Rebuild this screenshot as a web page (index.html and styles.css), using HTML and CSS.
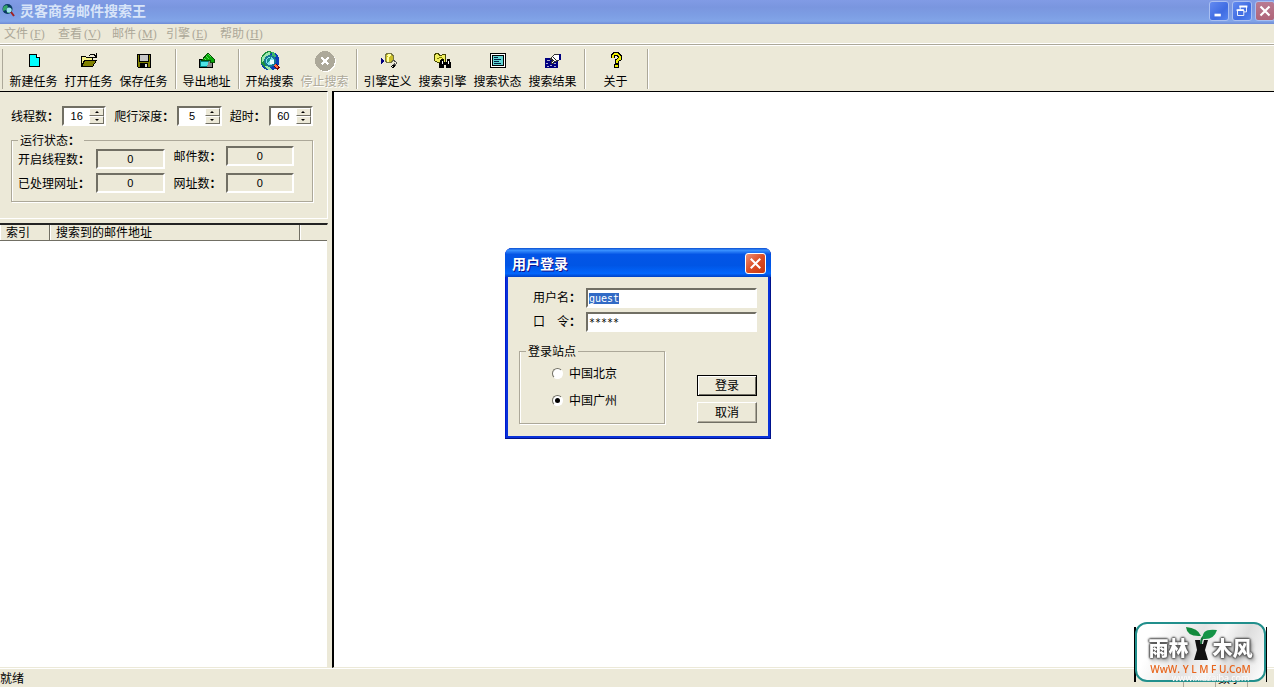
FILE: index.html
```html
<!DOCTYPE html>
<html lang="zh-CN">
<head>
<meta charset="utf-8">
<meta name="viewport" content="width=device-width, initial-scale=1">
<title>灵客商务邮件搜索王</title>
<link rel="stylesheet" href="styles.css">
<script src="main.js" defer></script>
</head>
<body>
<header class="titlebar">
  <svg class="app-icon" viewBox="0 0 13 13"><circle cx="5.500" cy="5" r="5" fill="#093a63"/><path d="M2 2l3-1 1 2-2 3-3 1V4zM6 5l3-1 1 2-2 3H5z" fill="#35a56a"/><circle cx="7" cy="6" r="2.500" fill="#9fe0f0"/><path d="M9 8l3 4" stroke="#a02020" stroke-width="2"/></svg>
  <h1 class="app-title">灵客商务邮件搜索王</h1>
  <div class="win-controls">
    <button class="win-btn" aria-label="最小化"><svg viewBox="0 0 20 20"><path d="M5 13h7v3H5z" fill="#fff"/></svg></button>
    <button class="win-btn" aria-label="还原"><svg viewBox="0 0 20 20"><path d="M8 8V5h7v6h-3M5 9h7v6H5z" fill="none" stroke="#fff" stroke-width="1"/><path d="M7 5h9M4 9h8" stroke="#fff" stroke-width="2"/></svg></button>
    <button class="win-btn win-btn-close" aria-label="关闭"><svg viewBox="0 0 20 20"><path d="M5 5l10 10M15 5L5 15" stroke="#fff" stroke-width="2.400"/></svg></button>
  </div>
</header>
<nav class="menubar">
  <button class="menu" disabled>文件<span class="key">(<u>F</u>)</span></button>
  <button class="menu" disabled>查看<span class="key">(<u>V</u>)</span></button>
  <button class="menu" disabled>邮件<span class="key">(<u>M</u>)</span></button>
  <button class="menu" disabled>引擎<span class="key">(<u>E</u>)</span></button>
  <button class="menu" disabled>帮助<span class="key">(<u>H</u>)</span></button>
</nav>
<div class="toolbar">
  <div class="tool-group">
    <button class="tool"><svg viewBox="0 0 24 24"><path d="M7.500 5.500h7l3 3v9h-10z" fill="#0ff" stroke="#000"/><path d="M14.500 5.500v3h3" fill="#fff" stroke="#000"/></svg>新建任务</button>
    <button class="tool"><svg viewBox="0 0 24 24"><path d="M4.500 16.500v-9h4l1 1h6v3" fill="#f4f08a" stroke="#000"/><path d="M4.500 17.500l3-6h12l-4 6z" fill="#808000" stroke="#000"/><path d="M12 6.500l2-1h3l2 2M19.500 4v4H16" fill="none" stroke="#000"/></svg>打开任务</button>
    <button class="tool"><svg viewBox="0 0 24 24"><path d="M5.500 5.500h13v13h-12l-1-1z" fill="#808000" stroke="#000"/><path d="M8 6h8v6H8z" fill="#c8c8c8"/><path d="M8 14h8v4H8z" fill="#000"/><path d="M13 15h2v3h-2z" fill="#ddd"/><path d="M7.500 6v6.500h9V6" fill="none" stroke="#000"/></svg>保存任务</button>
  </div>
  <div class="tool-group">
    <button class="tool"><svg viewBox="0 0 24 24"><path d="M4.500 10.500h13v8h-13z" fill="#008080" stroke="#000"/><path d="M6 13h8l-2 4H6z" fill="#4ee4e8"/><path d="M14 12h3v6h-5z" fill="#888"/><path d="M7 11l6-7 6 6v3h-4v-2z" fill="#08a808" stroke="#064d06"/><path d="M11 7l3 3M13 5l3 3M9 9l2 2" stroke="#56dd56"/></svg>导出地址</button>
  </div>
  <div class="tool-group">
    <button class="tool"><svg viewBox="0 0 24 24"><circle cx="12" cy="12" r="9.500" fill="#0b3fb8"/><path d="M12 2a10 10 0 0 0-9 13l5 5 3-2-3-5-3-1 2-4 5-2 2-3z" fill="#1c8f3f"/><path d="M4 9l4-5 4-1v3l-4 4-4 3zM7 17l4-1 3 5h-4z" fill="#9ce7ad"/><path d="M14 3l3 1 1 4-4-1z" fill="#39b86a"/><circle cx="12" cy="12" r="5" fill="#7fe3ee" stroke="#157694" stroke-width="2"/><path d="M9 10l4-2-1 4-3 2z" fill="#14908e"/><circle cx="14" cy="13" r="2.500" fill="#e8ffff"/><path d="M17 16l4 4" stroke="#700" stroke-width="4"/><path d="M17 16l3 3" stroke="#ff6d47" stroke-width="2"/></svg>开始搜索</button>
    <button class="tool" disabled><svg viewBox="0 0 24 24"><circle cx="13" cy="13" r="10" fill="#fff"/><circle cx="12" cy="12" r="10" fill="#aca899"/><path d="M8.500 8.500l7 7M15.500 8.500l-7 7" stroke="#fff" stroke-width="2"/></svg>停止搜索</button>
  </div>
  <div class="tool-group">
    <button class="tool"><svg viewBox="0 0 24 24"><path d="M5 9v6l3-3z" fill="#000080"/><path d="M9 6.500l2-2h4l2 2v5l-2 2h-4l-2-2z" fill="#c9bd28" stroke="#777744"/><path d="M10 6l3-1 3 1-3 2zM11 8h2v5h-2z" fill="#ffff9c"/><path d="M17 11l3 2v2l-3 1M18 14l2 3" stroke="#555" fill="none"/><path d="M15 18l2-2 2 1-3 2" stroke="#000" fill="none"/></svg>引擎定义</button>
    <button class="tool"><svg viewBox="0 0 24 24"><path d="M3.500 5.500l2-1h2l1 2 6-1v8h-8l-3-2z" fill="#f0ef60" stroke="#454500"/><path d="M6 10l4-2 2 2" stroke="#808000" fill="none"/><path d="M10 10h3v3h3v-3h3l1 5v4h-5v-3h-2v3H8v-4z" fill="#000"/><path d="M11 12v3M17 12v3" stroke="#fff"/></svg>搜索引擎</button>
    <button class="tool"><svg viewBox="0 0 24 24"><rect x="4.500" y="4.500" width="15" height="14" rx="1" fill="#fff" stroke="#000"/><rect x="6.500" y="6.500" width="11" height="10" fill="#62d5d5" stroke="#000"/><path d="M8 8.500h4M8 10.500h7M8 12.500h5M8 14.500h7" stroke="#024"/></svg>搜索状态</button>
    <button class="tool"><svg viewBox="0 0 24 24"><path d="M4 9h13v10H4z" fill="#000080"/><path d="M6 11h3M5 14h2M9 16h2M13 14h2M6 17h2M13 17h2" stroke="#acaccf"/><path d="M9 10l5-5 4 1v5l-5 2-1 2-2-1 2-3z" fill="#fff" stroke="#333"/><path d="M12 8l3 3M10 9l3 3" stroke="#222"/><path d="M18 5h2v6h-2z" fill="#000080"/></svg>搜索结果</button>
  </div>
  <div class="tool-group">
    <button class="tool"><svg viewBox="0 0 24 24"><path d="M8.500 9V7l2-2h3l2 2v3l-3 2v3" fill="none" stroke="#000" stroke-width="4"/><path d="M8.500 9V7l2-2h3l2 2v3l-3 2v2" fill="none" stroke="#ee0" stroke-width="2"/><circle cx="12.500" cy="17" r="2" fill="#ee0" stroke="#000"/></svg>关于</button>
  </div>
</div>
<main class="workspace">
  <section class="side">
    <form class="settings">
      <div class="spin-row">
        <label class="spin-label" for="threads">线程数<span class="colon">：</span></label>
        <div class="spin"><input id="threads" value="16"><div class="arrows"><button type="button" aria-label="增加"></button><button type="button" class="down" aria-label="减少"></button></div></div>
        <label class="spin-label" for="depth">爬行深度<span class="colon">：</span></label>
        <div class="spin"><input id="depth" value="5"><div class="arrows"><button type="button" aria-label="增加"></button><button type="button" class="down" aria-label="减少"></button></div></div>
        <label class="spin-label" for="timeout">超时<span class="colon">：</span></label>
        <div class="spin"><input id="timeout" value="60"><div class="arrows"><button type="button" aria-label="增加"></button><button type="button" class="down" aria-label="减少"></button></div></div>
      </div>
      <fieldset class="group status-group">
        <legend>运行状态<span class="colon">：</span></legend>
        <div class="stats">
          <label for="open">开启线程数<span class="colon">：</span></label><input id="open" value="0" readonly>
          <label class="raised" for="mails">邮件数<span class="colon">：</span></label><input class="raised" id="mails" value="0" readonly>
          <label for="done">已处理网址<span class="colon">：</span></label><input id="done" value="0" readonly>
          <label for="urls">网址数<span class="colon">：</span></label><input id="urls" value="0" readonly>
        </div>
      </fieldset>
    </form>
    <div class="list">
      <table class="results">
        <thead><tr><th class="col-index">索引</th><th class="col-mail">搜索到的邮件地址</th><th></th></tr></thead>
      </table>
    </div>
  </section>
  <section class="view"></section>
</main>
<footer class="statusbar"><span>就绪</span><span class="panes"><span class="pane"></span><span class="pane"></span><span class="pane">数字</span></span></footer>

<div class="overlay">
  <section class="dialog" role="dialog" aria-labelledby="dlg-title">
    <header class="dialog-title">
      <h2 id="dlg-title">用户登录</h2>
      <button class="dialog-close" aria-label="关闭"><svg viewBox="0 0 20 20"><path d="M5 5l10 10M15 5L5 15" stroke="#fff" stroke-width="2.200"/></svg></button>
    </header>
    <form class="dialog-body">
      <div class="fields">
        <label for="user">用户名<span class="colon">：</span></label><input id="user" value="guest">
        <label for="pass">口　令<span class="colon">：</span></label><input id="pass" value="*****" autocomplete="off">
      </div>
      <div class="dialog-bottom">
        <fieldset class="group site-group">
          <legend>登录站点</legend>
          <label class="choice"><input type="radio" name="site">中国北京</label>
          <label class="choice"><input type="radio" name="site" checked>中国广州</label>
        </fieldset>
        <div class="actions">
          <button type="button" class="push default">登录</button>
          <button type="button" class="push">取消</button>
        </div>
      </div>
    </form>
  </section>
</div>

<aside class="badge-wrap">
  <div class="badge">
    <div class="badge-name"><span>雨林</span><svg viewBox="0 0 32 36"><path d="M10 15h5l1 4h2l1-4h4l-3 10 3 10H9l3-10z" fill="#111"/><path d="M16 19q0-7 5-9" fill="none" stroke="#17713c" stroke-width="2"/><path d="M16 11Q2 12 1 2q12 1 15 9z" fill="#128a3c"/><path d="M18 14Q16 3 32 5q-3 10-14 9z" fill="#159447"/></svg><span>木风</span></div>
    <div class="badge-url">WwW. Y L M F U.CoM</div>
    <div class="badge-host">www.xiazaiba.com</div>
  </div>
</aside>
</body>
</html>
```

FILE: styles.css
```css
* { box-sizing: border-box; }
:root {
  --face: #ece9d8;
  --shade: #aca899;
  --dark: #716f64;
}
body {
  margin: 0;
  height: 100vh;
  display: flex;
  flex-direction: column;
  overflow: hidden;
  background: var(--face);
  color: #000;
  font: 12px/16px "Noto Sans CJK SC", sans-serif;
  text-spacing-trim: space-all;
}
button, input { font: inherit; color: inherit; margin: 0; padding: 0; }
button { border: 0; background: none; white-space: nowrap; }
svg { display: block; }
.colon { font-family: "Noto Sans CJK TC", sans-serif; font-weight: 700; }

.titlebar {
  flex: none;
  display: flex;
  align-items: center;
  height: 24px;
  padding: 0 0 3px 2px;
  background: linear-gradient(#819be5, #7a96df 30%, #7d9ee4 65%, #82a5e8 88%, #6f8bd6);
}
.app-icon { width: 13px; height: 13px; }
.app-title { margin: 0 auto 0 5px; padding-bottom: 2px; font-size: 14px; line-height: 18px; color: #d8e4f8; }
.win-controls { display: flex; gap: 3px; }
.win-btn {
  width: 20px;
  height: 20px;
  border: 1px solid #a9bff2;
  border-radius: 3px;
  background: linear-gradient(135deg, #638af0, #3f6ce2 60%, #5484ef);
}
.win-btn svg { width: 18px; height: 18px; }
.win-btn-close { margin-right: -1px; background: linear-gradient(#b97b92, #b06478); }

.menubar { flex: none; display: flex; height: 21px; border-bottom: 1px solid var(--shade); box-shadow: inset 0 -1px #fff; padding-left: 4px; }
.menu { width: 54px; text-align: left; color: var(--shade); line-height: 18px; padding-bottom: 2px; }
.key { font: 12px/12px "Liberation Serif", serif; padding-left: 2px; }

.toolbar { flex: none; display: flex; height: 46px; padding: 3px 0 2px 2px; border-top: 1px solid #fff; }
.toolbar::before { content: ""; width: 1px; background: var(--shade); margin-right: 3px; }
.tool-group { display: flex; padding-right: 4px; border-right: 1px solid var(--shade); box-shadow: 1px 0 #fff; }
.tool-group + .tool-group { padding-left: 3px; }
.tool { width: 55px; display: flex; flex-direction: column; align-items: center; line-height: 15px; padding-bottom: 1px; }
.tool svg { width: 24px; height: 24px; shape-rendering: crispEdges; }
.tool:disabled { color: var(--shade); text-shadow: 1px 1px #fff; }

.workspace { flex: 1; min-height: 0; display: flex; gap: 4px; }
.side { flex: none; width: 328px; display: flex; flex-direction: column; gap: 4px; }
.settings {
  height: 128px;
  padding: 14px 14px 0 11px;
  border-top: 1px solid #000;
  border-right: 1px solid #fff;
  border-bottom: 1px solid #fff;
}
.spin-row { display: flex; align-items: center; }
.spin-label { flex: none; margin-right: 3px; white-space: nowrap; }
.spin {
  flex: 1;
  display: flex;
  height: 20px;
  margin-right: 8px;
  background: #fff;
  border: 2px solid;
  border-color: var(--dark) #fff #fff var(--dark);
}
.spin:last-child { margin-right: 0; }
.spin input { flex: 1; width: 0; min-width: 0; border: 0; text-align: center; background: none; }
.spin input, .stats input { font: 11px/16px "Liberation Sans", sans-serif; }
.arrows { flex: none; width: 15px; display: flex; flex-direction: column; }
.arrows button { flex: 1; display: grid; place-items: center; background: var(--face); border: 1px solid; border-color: #fff var(--dark) var(--dark) #fff; }
.arrows button::before { content: ""; border: 2px solid transparent; border-top-width: 0; border-bottom-color: #000; }
.arrows .down::before { transform: rotate(180deg); }

.group { min-width: 0; margin: 0; padding: 0; border: 1px solid var(--shade); box-shadow: 1px 1px #fff, inset 1px 0 #fff; }
.group legend { padding: 0 2px; line-height: 16px; background: var(--face); }
.status-group { height: 70px; margin: 6px 0 0; padding: 0 18px 0 6px; }
.status-group legend { padding-right: 4px; }
.stats {
  display: grid;
  grid-template-columns: 74px 1fr 53px 1fr;
  grid-template-rows: 23px 20px;
  gap: 4px;
  align-items: end;
  margin-top: -2px;
  white-space: nowrap;
}
.stats .raised { align-self: start; }
.stats label { line-height: 20px; }
.stats label:nth-of-type(even) { justify-self: end; }
.stats input { width: 100%; height: 20px; text-align: center; background: var(--face); border: 2px solid; border-color: var(--dark) #fff #fff var(--dark); }

.list { flex: 1; background: #fff; border-top: 2px solid #222; border-right: 1px solid var(--face); border-bottom: 1px solid var(--face); }
.results { width: 100%; border-collapse: separate; border-spacing: 0; table-layout: fixed; }
.results th { height: 16px; padding: 0 6px 1px; font-weight: 400; line-height: 14px; text-align: left; background: var(--face); border-right: 1px solid var(--dark); border-bottom: 1px solid var(--dark); box-shadow: inset 1px 0 #fff; }
.results th:last-child { border-right: 0; }
.results .col-index { width: 50px; }
.results .col-mail { width: 250px; }
.view { flex: 1; background: #fff; border: solid; border-width: 1px 0 1px 2px; border-color: #000 #fff var(--face) #000; }
.statusbar { flex: none; height: 19px; display: flex; justify-content: space-between; line-height: 18px; border-top: 1px solid #fff; }
.panes { display: flex; margin-right: 26px; }
.pane { width: 32px; padding-left: 2px; white-space: nowrap; border-right: 1px solid var(--shade); }

.overlay { position: fixed; inset: 0 0 0 2px; display: grid; place-items: center; pointer-events: none; }
.dialog { width: 266px; pointer-events: auto; background: #0831d9; border-radius: 7px 7px 0 0; padding: 0 3px 3px; box-shadow: inset -1px -1px #00138c, inset 1px 0 #0019cf; }
.dialog-title {
  display: flex;
  align-items: center;
  justify-content: space-between;
  height: 29px;
  margin: 0 -3px;
  padding: 2px 5px 0 7px;
  border-radius: 7px 7px 0 0;
  background: linear-gradient(#0b4fd0, #3a91ff 8%, #0455e6 22%, #0055e5 60%, #0266fc 88%, #0041c4);
}
.dialog-title h2 { margin: 0; padding-bottom: 2px; font-size: 14px; line-height: 18px; color: #fff; text-shadow: 1px 1px #0f1089; }
.dialog-close { width: 21px; height: 21px; border: 1px solid #fff; border-radius: 3px; background: linear-gradient(135deg, #ec9078, #dc4d25 50%, #c8380f); }
.dialog-close svg { width: 19px; height: 19px; }
.dialog-body { background: var(--face); padding: 11px 11px 12px; }
.fields { display: grid; grid-template-columns: 49px 1fr; gap: 4px; padding-left: 14px; align-items: center; white-space: nowrap; }
.fields label { line-height: 18px; padding-bottom: 2px; }
.fields input { width: 100%; height: 20px; padding: 0 1px; outline: 0; background: #fff; border: 2px solid; border-color: var(--dark) #fff #fff var(--dark); font: 10px/14px "DejaVu Sans Mono", monospace; }
.fields input::selection { background: #316ac5; color: #fff; }
.dialog-bottom { display: flex; justify-content: space-between; align-items: flex-end; margin-top: 11px; }
.site-group { width: 146px; height: 81px; padding: 6px 0 0 32px; }
.site-group legend { margin-left: -26px; }
.choice { display: flex; align-items: center; gap: 6px; margin-bottom: 11px; }
.choice input { appearance: none; width: 11px; height: 11px; display: grid; place-items: center; background: #fff; border: 1px solid; border-color: var(--dark) #fff #fff var(--dark); border-radius: 50%; }
.choice input:checked::before { content: ""; width: 5px; height: 5px; border-radius: 50%; background: #000; }
.actions { display: flex; flex-direction: column; gap: 6px; margin-bottom: 1px; }
.push { width: 60px; height: 21px; line-height: 15px; padding-bottom: 3px; background: var(--face); border: 1px solid; border-color: #fff var(--dark) var(--dark) #fff; box-shadow: inset -1px -1px var(--shade); }
.push.default { border-color: #000; box-shadow: inset 1px 1px #fff, inset -1px -1px var(--dark); }

.badge-wrap { position: fixed; right: 7px; bottom: 5px; width: 133px; padding: 0 1px; background: linear-gradient(#000, #000) left bottom / 2px 55px no-repeat, linear-gradient(#000, #000) right bottom / 1px 55px no-repeat; }
.badge { height: 60px; border: 2px solid #218f8c; border-radius: 12px; background: linear-gradient(115deg, #fff 15%, #e4e4e4 45%, #f7f7f7 60%, #ddd 75%, #fff); text-align: center; }
.badge-name { display: flex; justify-content: center; align-items: flex-end; height: 37px; font-size: 20px; line-height: 26px; font-weight: 900; color: #fff; text-shadow: 1px 0 2px #555, -1px 0 2px #555, 0 1px 2px #555, 0 -1px 2px #555, 2px 3px 4px #888; }
.badge-name svg { width: 32px; height: 36px; margin: 0 -4px; }
.badge-url { font: 600 10px/14px "Open Sans", sans-serif; padding-top: 1px; color: #e8671f; white-space: nowrap; }
.badge-host { font: 9px/4px "Open Sans", sans-serif; padding-left: 20px; color: #fff; text-shadow: 0 0 1px #ddd; }
```

FILE: main.js
```js
const user = document.getElementById("user");
user.focus();
user.select();
```
